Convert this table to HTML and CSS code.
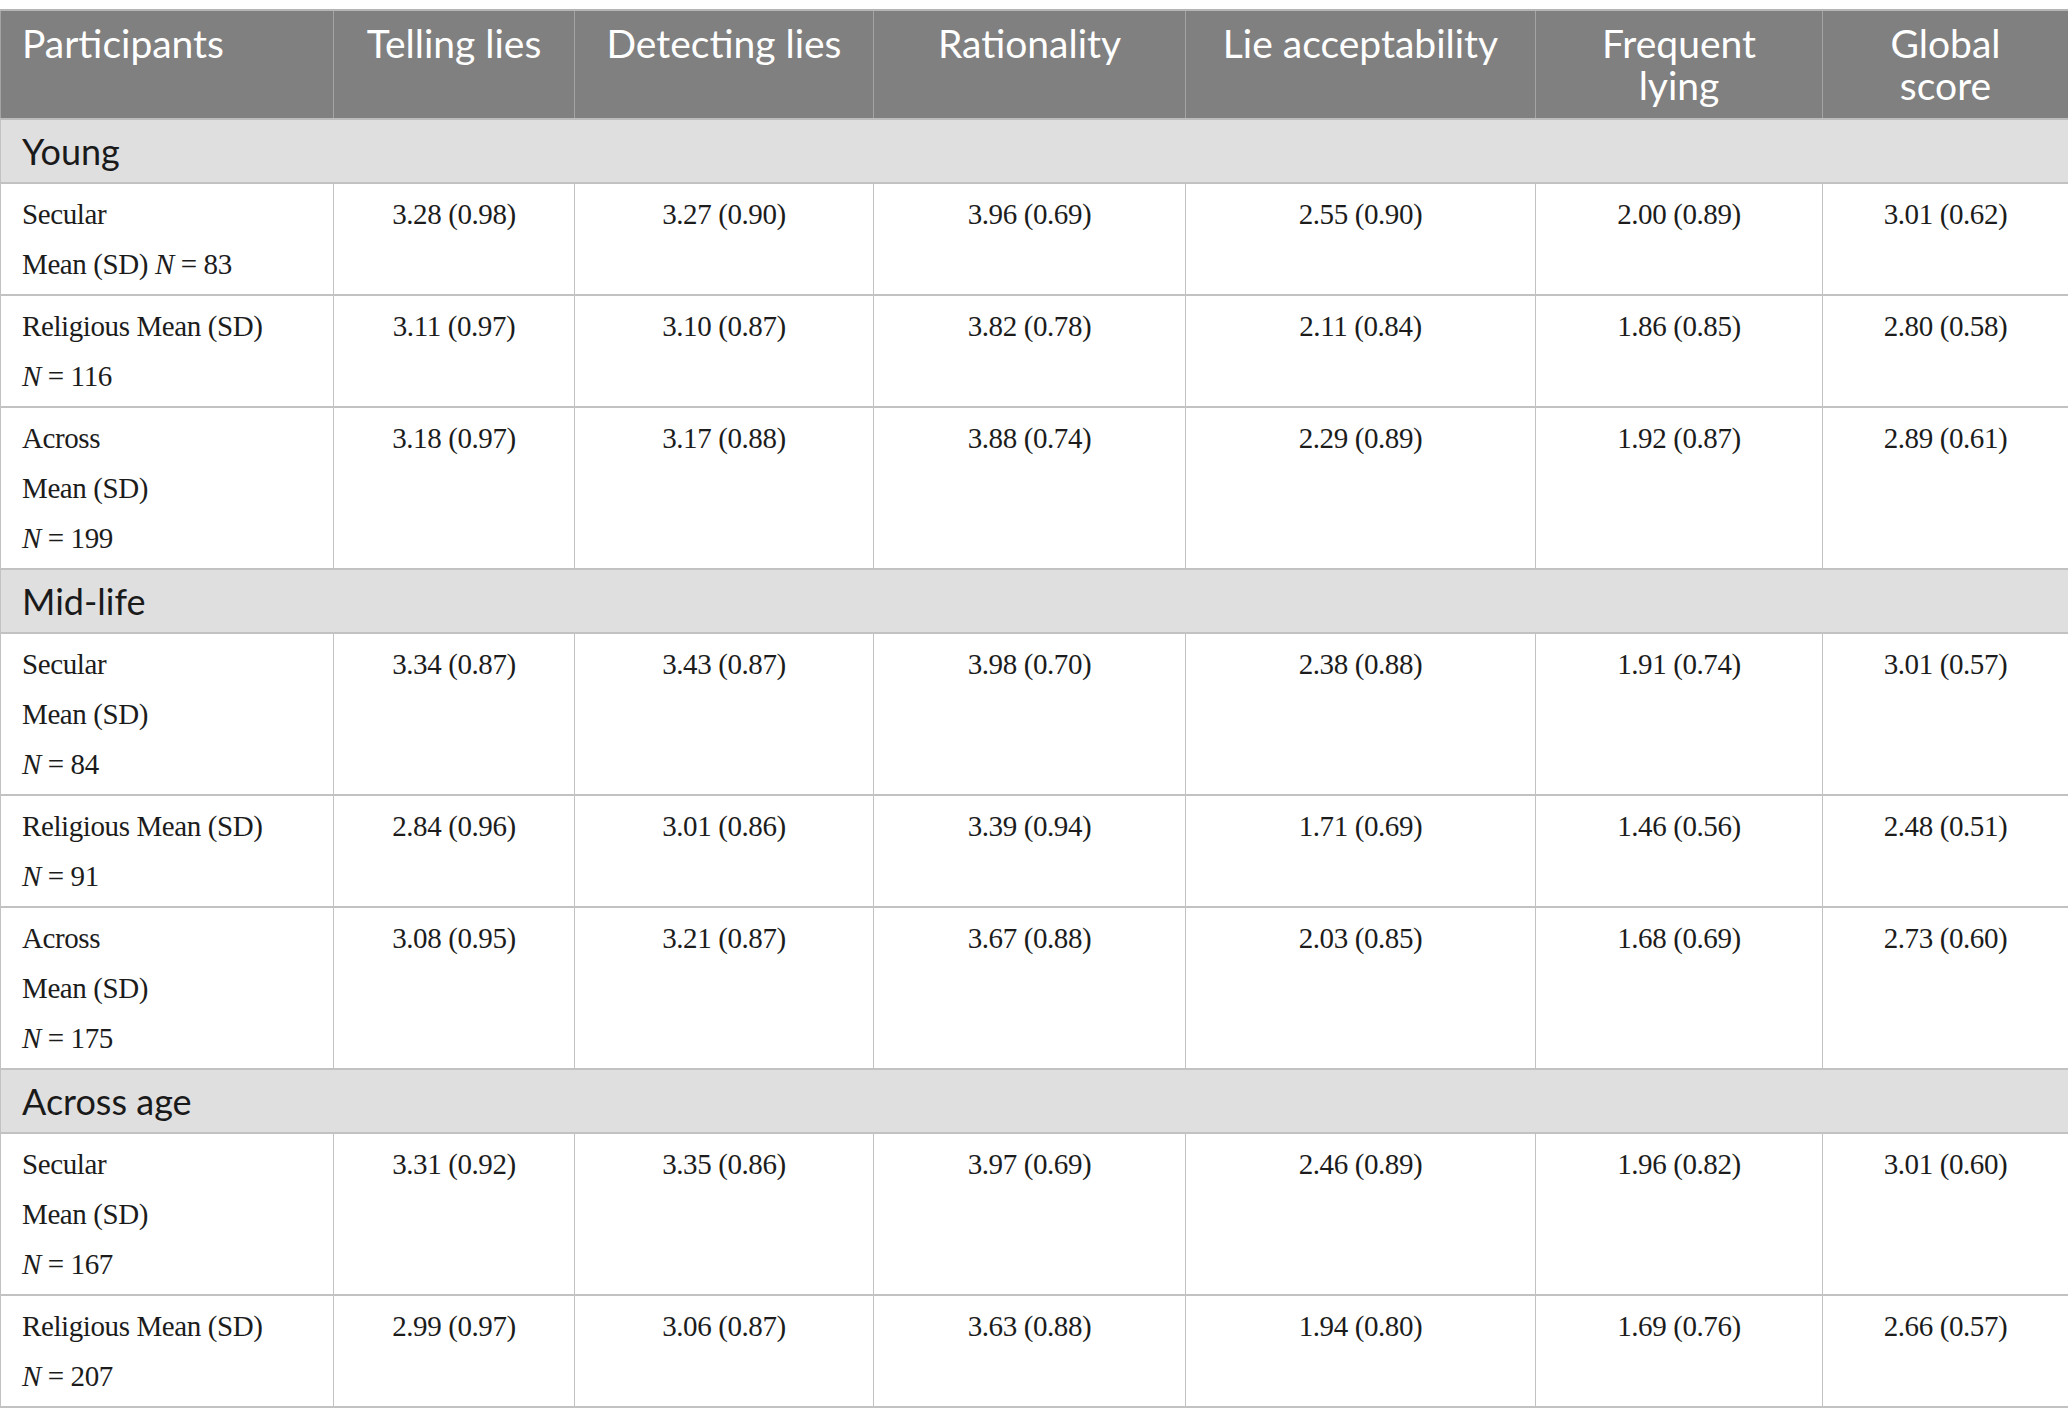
FILE: index.html
```html
<!DOCTYPE html>
<html lang="en">
<head>
    <meta charset="UTF-8">
    <title>Lying by age and religiosity</title>
    <link rel="stylesheet" href="styles.css">
</head>
<body>
    <table class="stats">
        <colgroup>
            <col class="c-part">
            <col class="c-tell">
            <col class="c-detect">
            <col class="c-rat">
            <col class="c-accept">
            <col class="c-freq">
            <col class="c-global">
        </colgroup>
        <thead>
            <tr>
                <th class="first">Participants</th>
                <th>Telling lies</th>
                <th>Detecting lies</th>
                <th>Rationality</th>
                <th>Lie acceptability</th>
                <th>Frequent<br>lying</th>
                <th>Global<br>score</th>
            </tr>
        </thead>
        <tbody>
            <!-- Young -->
            <tr class="group"><td colspan="7">Young</td></tr>
            <tr>
                <td class="label">Secular<br>Mean (SD) <i>N</i> = 83</td>
                <td>3.28 (0.98)</td><td>3.27 (0.90)</td><td>3.96 (0.69)</td><td>2.55 (0.90)</td><td>2.00 (0.89)</td><td>3.01 (0.62)</td>
            </tr>
            <tr>
                <td class="label">Religious Mean (SD)<br><i>N</i> = 116</td>
                <td>3.11 (0.97)</td><td>3.10 (0.87)</td><td>3.82 (0.78)</td><td>2.11 (0.84)</td><td>1.86 (0.85)</td><td>2.80 (0.58)</td>
            </tr>
            <tr>
                <td class="label">Across<br>Mean (SD)<br><i>N</i> = 199</td>
                <td>3.18 (0.97)</td><td>3.17 (0.88)</td><td>3.88 (0.74)</td><td>2.29 (0.89)</td><td>1.92 (0.87)</td><td>2.89 (0.61)</td>
            </tr>

            <!-- Mid-life -->
            <tr class="group"><td colspan="7">Mid-life</td></tr>
            <tr>
                <td class="label">Secular<br>Mean (SD)<br><i>N</i> = 84</td>
                <td>3.34 (0.87)</td><td>3.43 (0.87)</td><td>3.98 (0.70)</td><td>2.38 (0.88)</td><td>1.91 (0.74)</td><td>3.01 (0.57)</td>
            </tr>
            <tr>
                <td class="label">Religious Mean (SD)<br><i>N</i> = 91</td>
                <td>2.84 (0.96)</td><td>3.01 (0.86)</td><td>3.39 (0.94)</td><td>1.71 (0.69)</td><td>1.46 (0.56)</td><td>2.48 (0.51)</td>
            </tr>
            <tr>
                <td class="label">Across<br>Mean (SD)<br><i>N</i> = 175</td>
                <td>3.08 (0.95)</td><td>3.21 (0.87)</td><td>3.67 (0.88)</td><td>2.03 (0.85)</td><td>1.68 (0.69)</td><td>2.73 (0.60)</td>
            </tr>

            <!-- Across age -->
            <tr class="group"><td colspan="7">Across age</td></tr>
            <tr>
                <td class="label">Secular<br>Mean (SD)<br><i>N</i> = 167</td>
                <td>3.31 (0.92)</td><td>3.35 (0.86)</td><td>3.97 (0.69)</td><td>2.46 (0.89)</td><td>1.96 (0.82)</td><td>3.01 (0.60)</td>
            </tr>
            <tr>
                <td class="label">Religious Mean (SD)<br><i>N</i> = 207</td>
                <td>2.99 (0.97)</td><td>3.06 (0.87)</td><td>3.63 (0.88)</td><td>1.94 (0.80)</td><td>1.69 (0.76)</td><td>2.66 (0.57)</td>
            </tr>
        </tbody>
    </table>
</body>
</html>
```

FILE: styles.css
```css
body {
    margin: 9px 0 0 0;
    background: #fff;
}
.stats {
    width: 2068px;
    border-collapse: collapse;
    table-layout: fixed;
}
.c-part { width: 333px; }
.c-tell { width: 241px; }
.c-detect { width: 299px; }
.c-rat { width: 312px; }
.c-accept { width: 350px; }
.c-freq { width: 287px; }
.c-global { width: 246px; }

th {
    background: #7f807f;
    color: #fff;
    font-family: Lato, "Open Sans", sans-serif;
    font-weight: normal;
    font-size: 39px;
    line-height: 42px;
    text-align: center;
    vertical-align: top;
    padding: 11px 8px 12px;
    border: 1px solid #a3a4a3;
    border-top: 2px solid #b5b5b5;
    border-bottom: 2px solid #bcbcbc;
}
th.first {
    text-align: left;
    padding-left: 21px;
}
td {
    font-family: "Liberation Serif", "Times New Roman", serif;
    font-size: 29px;
    letter-spacing: -0.4px;
    line-height: 50px;
    color: #1c1c1c;
    text-align: center;
    vertical-align: top;
    padding: 5px 10px 5px;
    border: 1px solid #c2c2c2;
    border-top: 2px solid #c2c2c2;
    border-bottom: 2px solid #c2c2c2;
}
td.label {
    text-align: left;
    padding-left: 21px;
}
td i {
    font-style: italic;
}
.group td {
    background: #e0dfe0;
    font-family: Lato, "Open Sans", sans-serif;
    font-size: 36px;
    letter-spacing: 0;
    line-height: 40px;
    color: #1a1a1a;
    text-align: left;
    vertical-align: middle;
    padding: 11px 21px 11px;
}
```
